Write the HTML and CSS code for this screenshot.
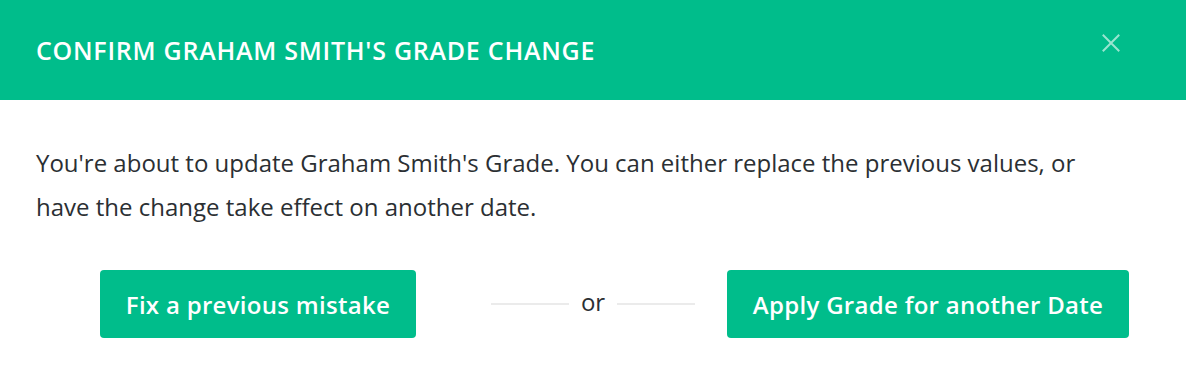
FILE: index.html
```html
<!DOCTYPE html>
<html>
<head>
<meta charset="utf-8">
<link rel="stylesheet" href="styles.css">
</head>
<body>
<div class="modal">
  <div class="modal-header">
    <h1 class="modal-title">CONFIRM GRAHAM SMITH'S GRADE CHANGE</h1>
    <button class="close" aria-label="Close">
      <svg width="18" height="18" viewBox="0 0 18 18"><path d="M1.5 1.5L16.5 16.5M16.5 1.5L1.5 16.5" stroke="currentColor" stroke-width="2" stroke-linecap="square"/></svg>
    </button>
  </div>
  <div class="modal-body">
    <p class="message">You're about to update Graham Smith's Grade. You can either replace the previous values, or have the change take effect on another date.</p>
    <div class="actions">
      <button class="btn">Fix a previous mistake</button>
      <div class="divider"><span class="line"></span><span class="or">or</span><span class="line"></span></div>
      <button class="btn">Apply Grade for another Date</button>
    </div>
  </div>
</div>
</body>
</html>
```
FILE: styles.css
```css
* { box-sizing: border-box; }
html, body { margin: 0; padding: 0; background: #fff; }
body { font-family: "Open Sans", Lato, sans-serif; color: #2b2f33; }
.modal { width: 1186px; height: 374px; }
.modal-header {
  height: 100px;
  background: #00bd8b;
  display: flex;
  align-items: center;
  justify-content: space-between;
  padding: 0 66px 0 36px;
}
.modal-title {
  margin: 0;
  color: #fff;
  font-size: 25px;
  font-weight: 600;
  letter-spacing: 0.75px;
}
.close {
  background: none;
  border: 0;
  padding: 0;
  color: rgba(255,255,255,0.6);
  display: flex;
  margin-top: -14px;
}
.modal-body { padding: 41px 36px 0; }
.message {
  margin: 0;
  padding-right: 36px;
  font-size: 24px;
  line-height: 44px;
  letter-spacing: 0;
}
.actions {
  margin-top: 41px;
  display: grid;
  grid-template-columns: repeat(3, 335px);
  justify-content: center;
  justify-items: center;
  align-items: center;
}
.btn {
  height: 68px;
  padding: 0 26px;
  background: #00bd8b;
  color: #fff;
  border: 0;
  border-radius: 4px;
  font-family: inherit;
  font-size: 24px;
  font-weight: 600;
  letter-spacing: 0.3px;
  white-space: nowrap;
}
.divider { display: flex; align-items: center; gap: 12px; }
.line { width: 78px; height: 2px; background: #ebebeb; }
.or { font-size: 24px; color: #2b2f33; line-height: 1; padding-bottom: 4px; }
```
